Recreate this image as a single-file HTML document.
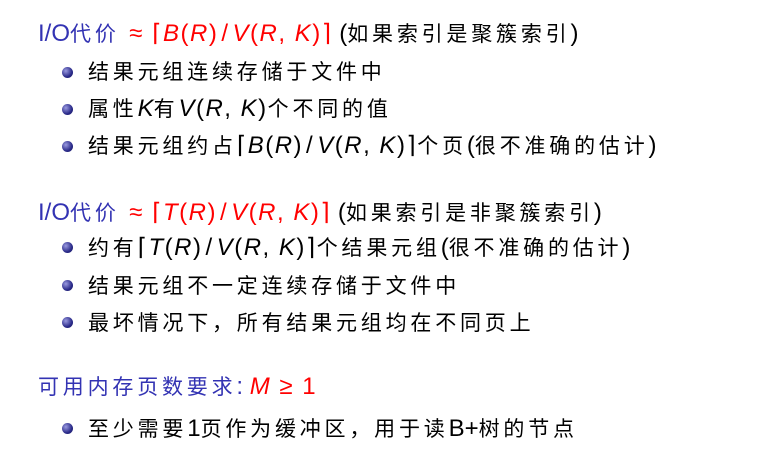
<!DOCTYPE html>
<html><head><meta charset="utf-8"><style>
body{margin:0;width:758px;height:467px;background:#fff;position:relative;overflow:hidden;font-family:"Liberation Sans","Noto Sans CJK SC",sans-serif;color:#000;}
.l{position:absolute;white-space:nowrap;font-size:24px;line-height:28px;}
.c{letter-spacing:3.8px;font-size:21px;}
.m{font-style:italic;}
.x{letter-spacing:1.5px;}
.s{padding:0 3px;}
.r{color:#f00;}
.b{color:#3333b3;}
.dot{position:absolute;width:11px;height:11px;border-radius:50%;background:radial-gradient(circle at 35% 35%,#9a9ae0,#2b2b8a 60%,#14145a);}
</style></head><body>
<div class="l b" style="left:38px;top:20px">I/O<span class="c">代价 </span><span class="r x">≈ ⌈<span class="m">B</span>(<span class="m">R</span>)<span class="s">/</span><span class="m">V</span>(<span class="m">R</span>, <span class="m">K</span>)⌉</span> <span style="color:#000">(<span class="c">如果索引是聚簇索引</span>)</span></div>
<div class="dot" style="left:62px;top:67px"></div>
<div class="l" style="left:88px;top:58px"><span class="c">结果元组连续存储于文件中</span></div>
<div class="dot" style="left:62px;top:104px"></div>
<div class="l" style="left:88px;top:95px"><span class="c">属性</span><span class="m">K</span><span class="c">有</span><span class="x"><span class="m">V</span>(<span class="m">R</span>, <span class="m">K</span>)</span><span class="c">个不同的值</span></div>
<div class="dot" style="left:62px;top:141px"></div>
<div class="l" style="left:88px;top:132px"><span class="c">结果元组约占</span><span class="x">⌈<span class="m">B</span>(<span class="m">R</span>)<span class="s">/</span><span class="m">V</span>(<span class="m">R</span>, <span class="m">K</span>)⌉</span><span class="c">个页</span>(<span class="c">很不准确的估计</span>)</div>

<div class="l b" style="left:38px;top:199px">I/O<span class="c">代价 </span><span class="r x">≈ ⌈<span class="m">T</span>(<span class="m">R</span>)<span class="s">/</span><span class="m">V</span>(<span class="m">R</span>, <span class="m">K</span>)⌉</span> <span style="color:#000">(<span class="c">如果索引是非聚簇索引</span>)</span></div>
<div class="dot" style="left:62px;top:242px"></div>
<div class="l" style="left:88px;top:234px"><span class="c">约有</span><span class="x">⌈<span class="m">T</span>(<span class="m">R</span>)<span class="s">/</span><span class="m">V</span>(<span class="m">R</span>, <span class="m">K</span>)⌉</span><span class="c">个结果元组</span>(<span class="c">很不准确的估计</span>)</div>
<div class="dot" style="left:62px;top:280px"></div>
<div class="l" style="left:88px;top:272px"><span class="c">结果元组不一定连续存储于文件中</span></div>
<div class="dot" style="left:62px;top:317px"></div>
<div class="l" style="left:88px;top:309px"><span class="c">最坏情况下，所有结果元组均在不同页上</span></div>

<div class="l b" style="left:38px;top:373px"><span class="c">可用内存页数要求</span>: <span class="r x"><span class="m">M</span> ≥ 1</span></div>
<div class="dot" style="left:62px;top:423px"></div>
<div class="l" style="left:88px;top:415px"><span class="c">至少需要</span>1<span class="c">页作为缓冲区，用于读</span>B+<span class="c">树的节点</span></div>
</body></html>
